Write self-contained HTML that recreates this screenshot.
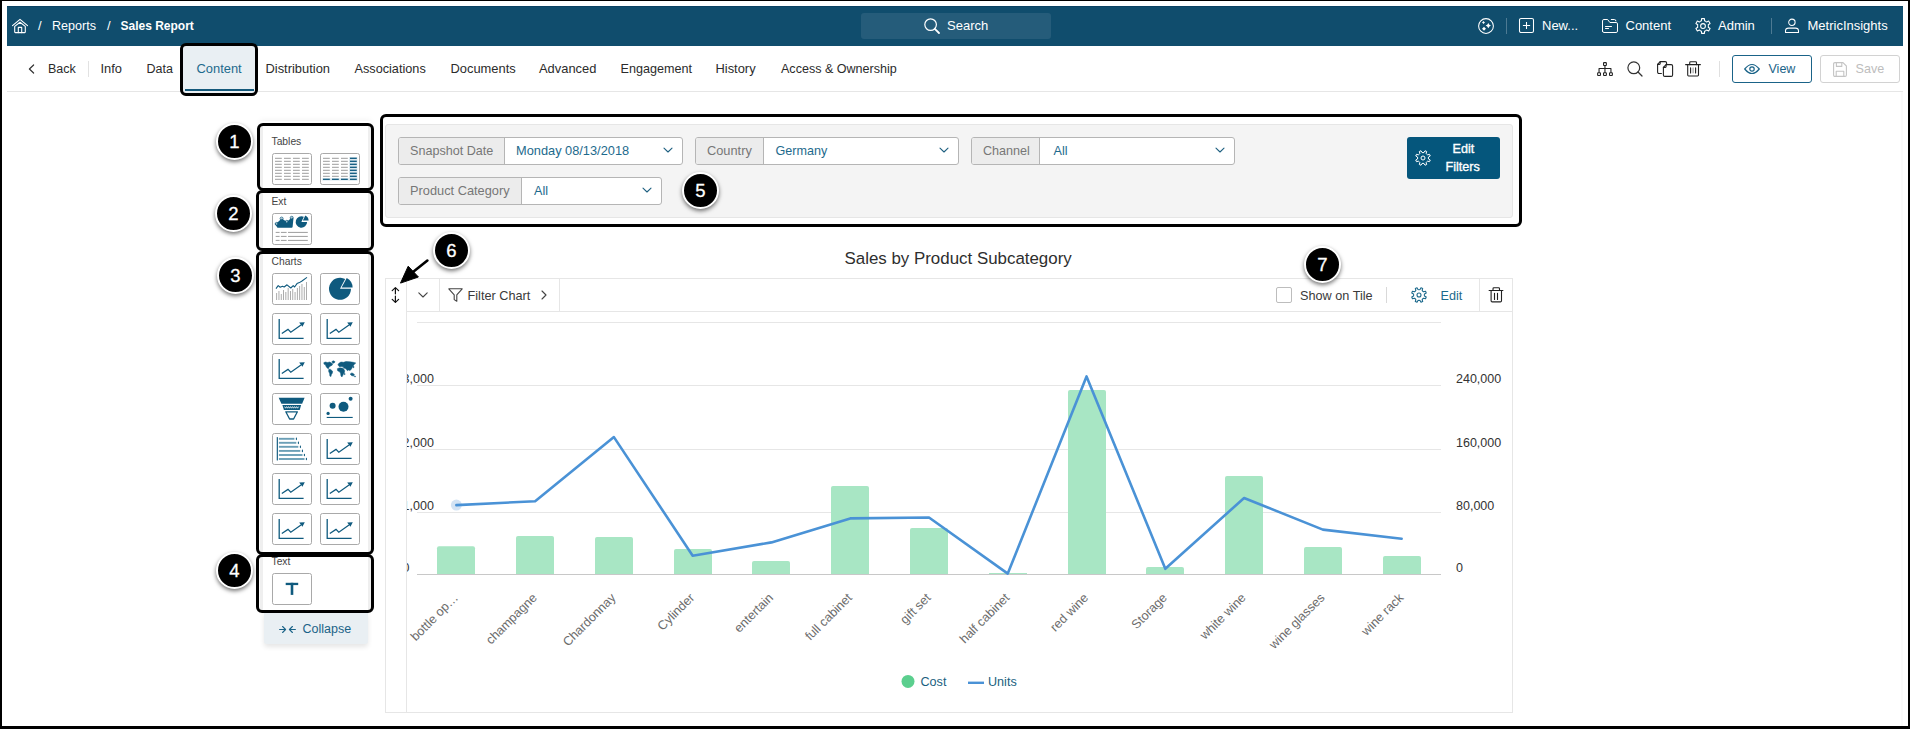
<!DOCTYPE html>
<html><head><meta charset="utf-8">
<style>
html,body{margin:0;padding:0;background:#000;}
body{width:1910px;height:729px;position:relative;overflow:hidden;font-family:"Liberation Sans",sans-serif;}
#frame{position:absolute;left:2px;top:1px;width:1906px;height:725px;background:#fff;overflow:hidden;}
.a{position:absolute;}
.t{position:absolute;white-space:nowrap;line-height:1;font-family:"Liberation Sans",sans-serif;}
svg{position:absolute;overflow:visible;}
</style></head>
<body>
<div id="frame"></div>
<!-- HEADER -->
<div class="a" style="left:7px;top:6px;width:1896px;height:40px;background:#104d6d;"></div>
<div class="a" style="left:7px;top:6px;width:1896px;height:1px;background:#0a4263;"></div>
<div class="a" style="left:861px;top:13px;width:190px;height:26px;background:#255c7a;border-radius:3px;"></div>
<div id="hdr">
<svg style="left:12px;top:18px" width="16" height="16" viewBox="0 0 16 16" fill="none" stroke="#fff" stroke-width="1.1" stroke-linejoin="round" stroke-linecap="round"><path d="M0.5 7.7 L8 1.4 L15.5 7.7"/><path d="M2.7 8.4 L8 4.3 L13.3 8.4 V14 Q13.3 14.6 12.7 14.6 H3.3 Q2.7 14.6 2.7 14 Z"/><path d="M6.3 14.6 V9.4 H9.7 V14.6"/></svg>
<div class="t" style="left:38px;top:19px;font-size:13px;color:#fff;">/</div>
<div class="t" style="left:52px;top:20px;font-size:12.6px;color:#fff;">Reports</div>
<div class="t" style="left:107px;top:19px;font-size:13px;color:#fff;">/</div>
<div class="t" style="left:120.5px;top:20px;font-size:12.0px;font-weight:bold;color:#fff;">Sales Report</div>
<svg style="left:924px;top:18px" width="16" height="16" viewBox="0 0 16 16" fill="none" stroke="#fff" stroke-width="1.2" stroke-linecap="round"><circle cx="6.6" cy="6.6" r="5.8"/><path d="M10.8 10.8 L15 15" stroke-width="1.8"/></svg>
<div class="t" style="left:947px;top:19px;font-size:13px;color:#fff;">Search</div>
<svg style="left:1478px;top:18px" width="16" height="16" viewBox="0 0 16 16" fill="none" stroke="#fff" stroke-width="1.05"><circle cx="8" cy="8" r="7.4"/><path d="M10.3 4.8999999999999995 Q11.056000000000001 6.843999999999999 13.0 7.6 Q11.056000000000001 8.356 10.3 10.3 Q9.544 8.356 7.6000000000000005 7.6 Q9.544 6.843999999999999 10.3 4.8999999999999995Z" fill="#fff" stroke="none"/><path d="M5.5 3.0 Q6.025 3.975 7.0 4.5 Q6.025 5.025 5.5 6.0 Q4.975 5.025 4.0 4.5 Q4.975 3.975 5.5 3.0Z" fill="#fff" stroke="none"/><path d="M6 8.7 Q6.8 9.899999999999999 8.0 10.7 Q6.8 11.5 6 12.7 Q5.2 11.5 4.0 10.7 Q5.2 9.899999999999999 6 8.7Z" fill="#fff" stroke="none"/></svg>
<div class="a" style="left:1506px;top:18px;width:1px;height:16px;background:#4d7a93;"></div>
<svg style="left:1519px;top:18px" width="15" height="15" viewBox="0 0 15 15" fill="none" stroke="#fff" stroke-width="1.05"><rect x="0.5" y="0.5" width="14" height="14" rx="1.6"/><path d="M7.5 3.9 V11.1 M3.9 7.5 H11.1"/></svg>
<div class="t" style="left:1542px;top:19px;font-size:13px;color:#fff;">New...</div>
<svg style="left:1601px;top:18px" width="18" height="16" viewBox="0 0 18 16" fill="none" stroke="#fff" stroke-width="1" stroke-linejoin="round" stroke-linecap="round"><path d="M1.5 13 V2.9 Q1.5 1.5 2.9 1.5 H6.6 L8.9 4.5 H15.1 Q16.5 4.5 16.5 5.9 V13.1 Q16.5 14.5 15.1 14.5 H2.9 Q1.5 14.5 1.5 13.1Z"/><path d="M10.3 1.5 H13.5 Q14.9 1.5 14.9 2.9"/><path d="M4.5 8.5 H10.5 M4.5 10.5 H7.5"/></svg>
<div class="t" style="left:1625.5px;top:19px;font-size:13px;color:#fff;">Content</div>
<svg style="left:1695px;top:18px" width="16" height="16" viewBox="0 0 16 16" fill="none" stroke="#fff" stroke-width="1.05" stroke-linejoin="round"><path d="M5.30 3.32 L6.42 2.84 L6.57 0.64 L9.43 0.64 L9.58 2.84 L10.70 3.32 L11.68 4.05 L13.66 3.08 L15.09 5.56 L13.26 6.79 L13.40 8.00 L13.26 9.21 L15.09 10.44 L13.66 12.92 L11.68 11.95 L10.70 12.68 L9.58 13.16 L9.43 15.36 L6.57 15.36 L6.42 13.16 L5.30 12.68 L4.32 11.95 L2.34 12.92 L0.91 10.44 L2.74 9.21 L2.60 8.00 L2.74 6.79 L0.91 5.56 L2.34 3.08 L4.32 4.05Z"/><circle cx="8" cy="8" r="2.4"/></svg>
<div class="t" style="left:1718px;top:19px;font-size:13px;color:#fff;">Admin</div>
<div class="a" style="left:1771px;top:18px;width:1px;height:16px;background:#4d7a93;"></div>
<svg style="left:1785px;top:18px" width="15" height="15" viewBox="0 0 15 15" fill="none" stroke="#fff" stroke-width="1.05"><circle cx="6.9" cy="4.3" r="3.2"/><path d="M0.5 14.4 V13 Q0.5 10.1 3.6 10.1 H10.4 Q13.5 10.1 13.5 13 V14.4 Z" stroke-linejoin="round"/></svg>
<div class="t" style="left:1807.5px;top:19px;font-size:13px;color:#fff;">MetricInsights</div>
</div>
<!-- TABS -->
<div id="tabs">
<div class="a" style="left:7px;top:91px;width:1896px;height:1px;background:#e6e6e6;"></div>
<svg style="left:28px;top:64px" width="7" height="10" viewBox="0 0 7 10" fill="none" stroke="#333" stroke-width="1.2" stroke-linecap="round" stroke-linejoin="round"><path d="M5.6 1 L1.4 5 L5.6 9"/></svg>
<div class="t" style="left:48px;top:63px;font-size:12.5px;color:#2b2b2b;">Back</div>
<div class="a" style="left:88px;top:61px;width:1px;height:16px;background:#e2e2e2;"></div>
<div class="t" style="left:100.5px;top:63px;font-size:12.9px;color:#2b2b2b;">Info</div>
<div class="t" style="left:146.5px;top:63px;font-size:12.5px;color:#2b2b2b;">Data</div>
<div class="a" style="left:183px;top:46px;width:72px;height:47px;background:#e9eff3;"></div>
<div class="a" style="left:185px;top:89.3px;width:69px;height:1.8px;background:#15597b;"></div>
<div class="t" style="left:196.5px;top:63px;font-size:12.9px;color:#1d6a8d;">Content</div>
<div class="t" style="left:265.5px;top:63px;font-size:12.9px;color:#2b2b2b;">Distribution</div>
<div class="t" style="left:354.5px;top:63px;font-size:12.7px;color:#2b2b2b;">Associations</div>
<div class="t" style="left:450.5px;top:63px;font-size:12.9px;color:#2b2b2b;">Documents</div>
<div class="t" style="left:539px;top:63px;font-size:12.9px;color:#2b2b2b;">Advanced</div>
<div class="t" style="left:620.5px;top:63px;font-size:12.6px;color:#2b2b2b;">Engagement</div>
<div class="t" style="left:715.5px;top:63px;font-size:12.9px;color:#2b2b2b;">History</div>
<div class="t" style="left:781px;top:63px;font-size:12.55px;color:#2b2b2b;">Access &amp; Ownership</div>
<svg style="left:1597px;top:62px" width="17" height="15" viewBox="0 0 17 15" fill="none" stroke="#222" stroke-width="1.1" stroke-linejoin="round"><rect x="6.55" y="0.65" width="2.8" height="2.8" rx="0.5"/><rect x="0.65" y="10.75" width="2.8" height="2.8" rx="0.5"/><rect x="6.55" y="10.75" width="2.8" height="2.8" rx="0.5"/><rect x="12.55" y="10.75" width="2.8" height="2.8" rx="0.5"/><path d="M7.95 3.5 V10.7 M2.05 10.7 V6.5 H13.95 V10.7"/></svg>
<svg style="left:1627px;top:61px" width="16" height="16" viewBox="0 0 16 16" fill="none" stroke="#333" stroke-width="1.2" stroke-linecap="round"><circle cx="6.8" cy="6.8" r="5.9"/><path d="M11 11 L15 15"/></svg>
<svg style="left:1657px;top:61px" width="17" height="16" viewBox="0 0 17 16" fill="none" stroke="#222" stroke-width="1.1" stroke-linejoin="round" stroke-linecap="round"><path d="M4.4 12.5 H2 Q0.6 12.5 0.6 11.1 V3.4 L3.2 0.6 H8.2 Q9.6 0.6 9.6 2 V2.8"/><path d="M0.6 3.4 H2.4 Q3.2 3.4 3.2 2.6 V0.6"/><path d="M6.4 14 V6.4 L9.1 3.6 H14.2 Q15.6 3.6 15.6 5 V14 Q15.6 15.4 14.2 15.4 H7.8 Q6.4 15.4 6.4 14 Z"/><path d="M6.4 6.4 H8.3 Q9.1 6.4 9.1 5.6 V3.6"/></svg>
<svg style="left:1685px;top:61px" width="17" height="16" viewBox="0 0 17 16" fill="none" stroke="#222" stroke-width="1.1" stroke-linejoin="round" stroke-linecap="round"><path d="M0.6 3.6 H15.4"/><path d="M4.7 3.6 V1.7 Q4.7 0.8 5.6 0.8 H10.6 Q11.5 0.8 11.5 1.7 V3.6"/><path d="M2.7 3.6 V14.1 Q2.7 15 3.6 15 H12.6 Q13.5 15 13.5 14.1 V3.6"/><path d="M5.6 6.9 V11.9 M10.6 6.9 V11.9"/><path d="M8.1 6.9 V11.9" stroke-width="0.8" stroke="#777"/></svg>
<div class="a" style="left:1719px;top:61px;width:1px;height:16px;background:#e0e0e0;"></div>
<div class="a" style="left:1732px;top:55px;width:78px;height:26px;border:1px solid #1a6388;border-radius:3px;"></div>
<svg style="left:1744px;top:63px" width="16" height="12" viewBox="0 0 16 12" fill="none" stroke="#1a6388" stroke-width="1.2"><path d="M0.7 6 Q8 -3 15.3 6 Q8 15 0.7 6Z" stroke-linejoin="round"/><circle cx="8" cy="6" r="2.2"/></svg>
<div class="t" style="left:1768.5px;top:63px;font-size:12.5px;color:#1a6388;">View</div>
<div class="a" style="left:1820px;top:55px;width:78px;height:26px;border:1px solid #d2d2d2;border-radius:3px;"></div>
<svg style="left:1833px;top:62px" width="14" height="15" viewBox="0 0 14 15" fill="none" stroke="#c4c4c4" stroke-width="1.1" stroke-linejoin="round"><path d="M0.6 2 Q0.6 0.6 2 0.6 H10 L13.4 4 V13 Q13.4 14.4 12 14.4 H2 Q0.6 14.4 0.6 13Z"/><path d="M3.4 0.6 V4.4 H8.8 V0.6"/><path d="M3.2 14.4 V9.2 H10.8 V14.4"/></svg>
<div class="t" style="left:1855.5px;top:63px;font-size:12.6px;color:#bdbdbd;">Save</div>
</div>
<div class="a" style="left:1901px;top:92px;width:2px;height:634px;background:#fafafa;"></div>
<!-- PALETTE -->
<div id="palette">
<div class="a" style="left:260px;top:121px;width:111px;height:491px;background:#fff;box-shadow:0 -1px 6px rgba(0,0,0,0.05);"></div>
<div class="a" style="left:260px;top:125px;width:3px;height:487px;background:#efefef;"></div>
<div class="a" style="left:368px;top:125px;width:3px;height:487px;background:#efefef;"></div>
<div class="a" style="left:264px;top:612px;width:104px;height:32px;background:#e9eff3;border-radius:0 0 3px 3px;box-shadow:0 3px 5px rgba(0,0,0,0.10);"></div>
<svg style="left:279px;top:624.5px" width="17" height="9" viewBox="0 0 17 9" fill="none" stroke="#1a6388" stroke-width="1.1" stroke-linecap="round" stroke-linejoin="round"><path d="M0.6 4.5 H6.6 M3.6 1.5 L6.6 4.5 L3.6 7.5"/><path d="M16.4 4.5 H10.4 M13.4 1.5 L10.4 4.5 L13.4 7.5"/></svg>
<div class="t" style="left:302.5px;top:623px;font-size:12.5px;color:#1a6388;">Collapse</div>
<!--ICONS--><div class="a" style="left:272px;top:153px;width:40px;height:32px;box-sizing:border-box;border:1.3px solid #a9a9a9;border-radius:2.5px;background:#fff;"></div><svg style="left:272px;top:153px" width="40" height="32" viewBox="0 0 40 32"><rect x="3" y="4.80" width="6.8" height="1.0" fill="#9d9d9d"/><rect x="3" y="7.80" width="6.8" height="1.0" fill="#9d9d9d"/><rect x="3" y="10.80" width="6.8" height="1.0" fill="#9d9d9d"/><rect x="3" y="13.80" width="6.8" height="1.0" fill="#9d9d9d"/><rect x="3" y="16.80" width="6.8" height="1.0" fill="#9d9d9d"/><rect x="3" y="19.80" width="6.8" height="1.0" fill="#9d9d9d"/><rect x="3" y="22.80" width="6.8" height="1.0" fill="#9d9d9d"/><rect x="3" y="25.80" width="6.8" height="1.0" fill="#9d9d9d"/><rect x="12" y="4.80" width="6.8" height="1.0" fill="#9d9d9d"/><rect x="12" y="7.80" width="6.8" height="1.0" fill="#9d9d9d"/><rect x="12" y="10.80" width="6.8" height="1.0" fill="#9d9d9d"/><rect x="12" y="13.80" width="6.8" height="1.0" fill="#9d9d9d"/><rect x="12" y="16.80" width="6.8" height="1.0" fill="#9d9d9d"/><rect x="12" y="19.80" width="6.8" height="1.0" fill="#9d9d9d"/><rect x="12" y="22.80" width="6.8" height="1.0" fill="#9d9d9d"/><rect x="12" y="25.80" width="6.8" height="1.0" fill="#9d9d9d"/><rect x="21" y="4.80" width="6.8" height="1.0" fill="#9d9d9d"/><rect x="21" y="7.80" width="6.8" height="1.0" fill="#9d9d9d"/><rect x="21" y="10.80" width="6.8" height="1.0" fill="#9d9d9d"/><rect x="21" y="13.80" width="6.8" height="1.0" fill="#9d9d9d"/><rect x="21" y="16.80" width="6.8" height="1.0" fill="#9d9d9d"/><rect x="21" y="19.80" width="6.8" height="1.0" fill="#9d9d9d"/><rect x="21" y="22.80" width="6.8" height="1.0" fill="#9d9d9d"/><rect x="21" y="25.80" width="6.8" height="1.0" fill="#9d9d9d"/><rect x="30" y="4.80" width="6.8" height="1.0" fill="#9d9d9d"/><rect x="30" y="7.80" width="6.8" height="1.0" fill="#9d9d9d"/><rect x="30" y="10.80" width="6.8" height="1.0" fill="#9d9d9d"/><rect x="30" y="13.80" width="6.8" height="1.0" fill="#9d9d9d"/><rect x="30" y="16.80" width="6.8" height="1.0" fill="#9d9d9d"/><rect x="30" y="19.80" width="6.8" height="1.0" fill="#9d9d9d"/><rect x="30" y="22.80" width="6.8" height="1.0" fill="#9d9d9d"/><rect x="30" y="25.80" width="6.8" height="1.0" fill="#9d9d9d"/></svg>
<div class="a" style="left:320px;top:153px;width:40px;height:32px;box-sizing:border-box;border:1.3px solid #a9a9a9;border-radius:2.5px;background:#fff;"></div><svg style="left:320px;top:153px" width="40" height="32" viewBox="0 0 40 32"><rect x="29" y="4" width="8.4" height="23.6" fill="#dbe8ef"/><rect x="2.2" y="25.2" width="35.2" height="2.4" fill="#dbe8ef"/><rect x="3" y="4.80" width="6.8" height="1.0" fill="#9d9d9d"/><rect x="3" y="7.80" width="6.8" height="1.0" fill="#9d9d9d"/><rect x="3" y="10.80" width="6.8" height="1.0" fill="#9d9d9d"/><rect x="3" y="13.80" width="6.8" height="1.0" fill="#9d9d9d"/><rect x="3" y="16.80" width="6.8" height="1.0" fill="#9d9d9d"/><rect x="3" y="19.80" width="6.8" height="1.0" fill="#9d9d9d"/><rect x="3" y="22.80" width="6.8" height="1.0" fill="#9d9d9d"/><rect x="3" y="25.65" width="6.8" height="1.3" fill="#0f5a7e"/><rect x="12" y="4.80" width="6.8" height="1.0" fill="#9d9d9d"/><rect x="12" y="7.80" width="6.8" height="1.0" fill="#9d9d9d"/><rect x="12" y="10.80" width="6.8" height="1.0" fill="#9d9d9d"/><rect x="12" y="13.80" width="6.8" height="1.0" fill="#9d9d9d"/><rect x="12" y="16.80" width="6.8" height="1.0" fill="#9d9d9d"/><rect x="12" y="19.80" width="6.8" height="1.0" fill="#9d9d9d"/><rect x="12" y="22.80" width="6.8" height="1.0" fill="#9d9d9d"/><rect x="12" y="25.65" width="6.8" height="1.3" fill="#0f5a7e"/><rect x="21" y="4.80" width="6.8" height="1.0" fill="#9d9d9d"/><rect x="21" y="7.80" width="6.8" height="1.0" fill="#9d9d9d"/><rect x="21" y="10.80" width="6.8" height="1.0" fill="#9d9d9d"/><rect x="21" y="13.80" width="6.8" height="1.0" fill="#9d9d9d"/><rect x="21" y="16.80" width="6.8" height="1.0" fill="#9d9d9d"/><rect x="21" y="19.80" width="6.8" height="1.0" fill="#9d9d9d"/><rect x="21" y="22.80" width="6.8" height="1.0" fill="#9d9d9d"/><rect x="21" y="25.65" width="6.8" height="1.3" fill="#0f5a7e"/><rect x="30" y="4.65" width="6.8" height="1.3" fill="#0f5a7e"/><rect x="30" y="7.65" width="6.8" height="1.3" fill="#0f5a7e"/><rect x="30" y="10.65" width="6.8" height="1.3" fill="#0f5a7e"/><rect x="30" y="13.65" width="6.8" height="1.3" fill="#0f5a7e"/><rect x="30" y="16.65" width="6.8" height="1.3" fill="#0f5a7e"/><rect x="30" y="19.65" width="6.8" height="1.3" fill="#0f5a7e"/><rect x="30" y="22.65" width="6.8" height="1.3" fill="#0f5a7e"/><rect x="30" y="25.65" width="6.8" height="1.3" fill="#0f5a7e"/></svg>
<div class="a" style="left:272px;top:213px;width:40px;height:32px;box-sizing:border-box;border:1.3px solid #a9a9a9;border-radius:2.5px;background:#fff;"></div><svg style="left:272px;top:213px" width="40" height="32" viewBox="0 0 40 32"><path d="M3.2 11 Q3.6 9.8 4.7 10.2 L9.6 5.6 L14.8 8.8 L19.7 4.8 Q21.4 4.4 21.4 6 L20.6 14 Q20.4 14.8 19.6 14.8 H6 Q5 14.8 4.8 13.8 Z" fill="#0f5a7e"/><g fill="#a9c4d2"><circle cx="4.7" cy="10.9" r="0.9"/><circle cx="9.6" cy="5.6" r="0.9"/><circle cx="14.8" cy="8.8" r="0.9"/><circle cx="19.7" cy="4.8" r="0.9"/></g><g fill="none" stroke="#0f5a7e" stroke-width="0.8"><circle cx="4.7" cy="10.9" r="1.5"/><circle cx="9.6" cy="5.6" r="1.5"/><circle cx="14.8" cy="8.8" r="1.5"/><circle cx="19.7" cy="4.8" r="1.5"/></g><path d="M29.4 9 L35.1 9 A5.7 5.7 0 1 1 31.81 3.83 Z" fill="#0f5a7e"/><path d="M30.90 7.60 L33.31 2.43 A5.7 5.7 0 0 1 36.60 7.60 Z" fill="#0f5a7e"/><rect x="3.7" y="18.9" width="3.9" height="1" fill="#9d9d9d"/><rect x="8.9" y="18.9" width="5.7" height="1" fill="#9d9d9d"/><rect x="16" y="18.9" width="19.8" height="1" fill="#9d9d9d"/><rect x="3.7" y="22.9" width="3.9" height="1" fill="#9d9d9d"/><rect x="8.9" y="22.9" width="5.7" height="1" fill="#9d9d9d"/><rect x="16" y="22.9" width="19.8" height="1" fill="#9d9d9d"/><rect x="3.7" y="26.9" width="3.9" height="1" fill="#9d9d9d"/><rect x="8.9" y="26.9" width="5.7" height="1" fill="#9d9d9d"/><rect x="16" y="26.9" width="19.8" height="1" fill="#9d9d9d"/></svg>
<div class="a" style="left:272px;top:273px;width:40px;height:32px;box-sizing:border-box;border:1.3px solid #a9a9a9;border-radius:2.5px;background:#fff;"></div><svg style="left:272px;top:273px" width="40" height="32" viewBox="0 0 40 32"><rect x="4.20" y="20" width="0.9" height="7" fill="#a3a3a3"/><rect x="6.50" y="18" width="0.9" height="9" fill="#a3a3a3"/><rect x="8.80" y="21" width="0.9" height="6" fill="#a3a3a3"/><rect x="11.10" y="17" width="0.9" height="10" fill="#a3a3a3"/><rect x="13.40" y="19" width="0.9" height="8" fill="#a3a3a3"/><rect x="15.70" y="15" width="0.9" height="12" fill="#a3a3a3"/><rect x="18.00" y="18" width="0.9" height="9" fill="#a3a3a3"/><rect x="20.30" y="16" width="0.9" height="11" fill="#a3a3a3"/><rect x="22.60" y="19" width="0.9" height="8" fill="#a3a3a3"/><rect x="24.90" y="15" width="0.9" height="12" fill="#a3a3a3"/><rect x="27.20" y="13" width="0.9" height="14" fill="#a3a3a3"/><rect x="29.50" y="11" width="0.9" height="16" fill="#a3a3a3"/><rect x="31.80" y="14" width="0.9" height="13" fill="#a3a3a3"/><rect x="34.10" y="9" width="0.9" height="18" fill="#a3a3a3"/><path d="M4 15.6 L6.2 12.6 L8.2 14.2 L10.4 13.2 L12.2 14 L15 11.8 L18.8 15 L21.2 12.6 L22.6 14 L25 10.6 L27.4 9.6 L30 8 L35 4.4" fill="none" stroke="#0f5a7e" stroke-width="1.1" stroke-linejoin="round"/></svg>
<div class="a" style="left:320px;top:273px;width:40px;height:32px;box-sizing:border-box;border:1.3px solid #a9a9a9;border-radius:2.5px;background:#fff;"></div><svg style="left:320px;top:273px" width="40" height="32" viewBox="0 0 40 32"><path d="M20 15.8 L31 15.8 A11 11 0 1 1 25.16 6.09 Z" fill="#0f5a7e"/><path d="M21.60 14.60 L26.76 4.89 A11 11 0 0 1 32.60 14.60 Z" fill="#0f5a7e"/></svg>
<div class="a" style="left:272px;top:313px;width:40px;height:32px;box-sizing:border-box;border:1.3px solid #a9a9a9;border-radius:2.5px;background:#fff;"></div><svg style="left:272px;top:313px" width="40" height="32" viewBox="0 0 40 32"><path d="M7.2 6 V25.4 H31.6" fill="none" stroke="#0f5a7e" stroke-width="1.3"/><path d="M9.8 20.6 L16 16.4 L18.8 19.2 L29 12" fill="none" stroke="#0f5a7e" stroke-width="1.25"/><path d="M32.8 9.2 L27.2 9.6 L30.4 13.8 Z" fill="#0f5a7e"/></svg>
<div class="a" style="left:320px;top:313px;width:40px;height:32px;box-sizing:border-box;border:1.3px solid #a9a9a9;border-radius:2.5px;background:#fff;"></div><svg style="left:320px;top:313px" width="40" height="32" viewBox="0 0 40 32"><path d="M7.2 6 V25.4 H31.6" fill="none" stroke="#0f5a7e" stroke-width="1.3"/><path d="M9.8 20.6 L16 16.4 L18.8 19.2 L29 12" fill="none" stroke="#0f5a7e" stroke-width="1.25"/><path d="M32.8 9.2 L27.2 9.6 L30.4 13.8 Z" fill="#0f5a7e"/></svg>
<div class="a" style="left:272px;top:353px;width:40px;height:32px;box-sizing:border-box;border:1.3px solid #a9a9a9;border-radius:2.5px;background:#fff;"></div><svg style="left:272px;top:353px" width="40" height="32" viewBox="0 0 40 32"><path d="M7.2 6 V25.4 H31.6" fill="none" stroke="#0f5a7e" stroke-width="1.3"/><path d="M9.8 20.6 L16 16.4 L18.8 19.2 L29 12" fill="none" stroke="#0f5a7e" stroke-width="1.25"/><path d="M32.8 9.2 L27.2 9.6 L30.4 13.8 Z" fill="#0f5a7e"/></svg>
<div class="a" style="left:320px;top:353px;width:40px;height:32px;box-sizing:border-box;border:1.3px solid #a9a9a9;border-radius:2.5px;background:#fff;"></div><svg style="left:320px;top:353px" width="40" height="32" viewBox="0 0 40 32"><g fill="#0f5a7e" stroke="#0f5a7e" stroke-width="0.5" stroke-linejoin="round"><path d="M3.7 9.8 L5.2 9.0 L7.7 9.5 L9.6 9.0 L11.1 9.8 L12.6 10.9 L12.1 12.2 L10.1 13.2 L8.9 14.5 L8.4 15.7 L7.4 15.2 L6.2 13.7 L5.4 11.8 L4.2 11.3 Z"/><path d="M11.9 8.5 L13.6 7.8 L15.1 8.8 L14.1 10 L12.6 10.3 Z"/><path d="M8.9 16.2 L10.6 16.4 L12.6 18.2 L12.4 20.1 L11.4 21.6 L10.9 23.6 L9.9 23.1 L9.6 20.6 L8.6 18.2 Z"/><path d="M18 11.3 L19.5 9.8 L21 9 L23.5 9.3 L26 8.5 L29.9 8.8 L33.3 9.3 L35.8 10 L34.3 11.3 L33.3 12.7 L32.3 14.2 L31.4 16.2 L29.9 17.5 L28.4 17 L27.4 17.7 L25.9 15.8 L24.4 15.2 L23 14.7 L21.5 13.7 L19.5 13.7 L18.5 12.7 Z"/><path d="M17.3 15.7 L19 15 L21.5 14.7 L23.5 15.7 L24.7 17.7 L24.4 19.6 L23.2 21.6 L22 23.9 L21 23.1 L20.5 20.1 L19.5 18.7 L17.6 17.7 Z"/><path d="M30.1 21.1 L31.8 19.9 L33.3 20.6 L34.6 22.1 L33.3 23.1 L31.4 22.4 Z"/><circle cx="33.4" cy="14" r="0.7"/><circle cx="24.6" cy="21" r="0.6"/><circle cx="35" cy="23.6" r="0.5"/></g><path d="M20.6 14.3 H23.4" stroke="#fff" stroke-width="0.8"/></svg>
<div class="a" style="left:272px;top:393px;width:40px;height:32px;box-sizing:border-box;border:1.3px solid #a9a9a9;border-radius:2.5px;background:#fff;"></div><svg style="left:272px;top:393px" width="40" height="32" viewBox="0 0 40 32"><path d="M6.7 4.8 H32.6 L30.1 10.8 H9.4 Z" fill="#0f5a7e"/><path d="M10.4 12 H29.1 L27.7 16.9 H11.9 Z" fill="#0f5a7e"/><path d="M12.6 13.6 L13.6 15.2 L14.6 13.6 L15.6 15.2 L16.6 13.6 L17.6 15.2 L18.6 13.6 L19.6 15.2 L20.6 13.6 L21.6 15.2 L22.6 13.6 L23.6 15.2 L24.6 13.6 L25.6 15.2 L26.6 13.6" fill="none" stroke="#fff" stroke-width="0.8"/><path d="M13.8 18.8 H25.4 L21.6 26 H17.6 Z" fill="none" stroke="#0f5a7e" stroke-width="1.3" stroke-linejoin="round"/></svg>
<div class="a" style="left:320px;top:393px;width:40px;height:32px;box-sizing:border-box;border:1.3px solid #a9a9a9;border-radius:2.5px;background:#fff;"></div><svg style="left:320px;top:393px" width="40" height="32" viewBox="0 0 40 32"><g fill="#0f5a7e"><circle cx="30.6" cy="5.8" r="2"/><circle cx="12.6" cy="12.7" r="3"/><circle cx="23.5" cy="13.7" r="5"/><circle cx="8.1" cy="20.4" r="1.6"/></g><rect x="6.7" y="23.9" width="26" height="1.1" fill="#0f5a7e"/></svg>
<div class="a" style="left:272px;top:433px;width:40px;height:32px;box-sizing:border-box;border:1.3px solid #a9a9a9;border-radius:2.5px;background:#fff;"></div><svg style="left:272px;top:433px" width="40" height="32" viewBox="0 0 40 32"><rect x="4.75" y="4" width="1.15" height="23.6" rx="0.5" fill="#0f5a7e"/><rect x="6.9" y="4.85" width="15.50" height="1.9" fill="#6b9fb6"/><ellipse cx="24.4" cy="5.8" rx="0.6" ry="1.35" fill="#0f5a7e"/><rect x="6.9" y="8.85" width="17.40" height="1.9" fill="#6b9fb6"/><ellipse cx="26.4" cy="9.8" rx="0.6" ry="1.35" fill="#0f5a7e"/><rect x="6.9" y="12.85" width="19.40" height="1.9" fill="#6b9fb6"/><ellipse cx="28.4" cy="13.8" rx="0.6" ry="1.35" fill="#0f5a7e"/><rect x="6.9" y="16.95" width="21.40" height="1.9" fill="#6b9fb6"/><ellipse cx="30.4" cy="17.9" rx="0.6" ry="1.35" fill="#0f5a7e"/><rect x="6.9" y="21.05" width="23.60" height="1.9" fill="#6b9fb6"/><ellipse cx="32.400000000000006" cy="22" rx="0.6" ry="1.35" fill="#0f5a7e"/><rect x="6.9" y="25.05" width="25.60" height="1.9" fill="#6b9fb6"/><ellipse cx="34.400000000000006" cy="26" rx="0.6" ry="1.35" fill="#0f5a7e"/></svg>
<div class="a" style="left:320px;top:433px;width:40px;height:32px;box-sizing:border-box;border:1.3px solid #a9a9a9;border-radius:2.5px;background:#fff;"></div><svg style="left:320px;top:433px" width="40" height="32" viewBox="0 0 40 32"><path d="M7.2 6 V25.4 H31.6" fill="none" stroke="#0f5a7e" stroke-width="1.3"/><path d="M9.8 20.6 L16 16.4 L18.8 19.2 L29 12" fill="none" stroke="#0f5a7e" stroke-width="1.25"/><path d="M32.8 9.2 L27.2 9.6 L30.4 13.8 Z" fill="#0f5a7e"/></svg>
<div class="a" style="left:272px;top:473px;width:40px;height:32px;box-sizing:border-box;border:1.3px solid #a9a9a9;border-radius:2.5px;background:#fff;"></div><svg style="left:272px;top:473px" width="40" height="32" viewBox="0 0 40 32"><path d="M7.2 6 V25.4 H31.6" fill="none" stroke="#0f5a7e" stroke-width="1.3"/><path d="M9.8 20.6 L16 16.4 L18.8 19.2 L29 12" fill="none" stroke="#0f5a7e" stroke-width="1.25"/><path d="M32.8 9.2 L27.2 9.6 L30.4 13.8 Z" fill="#0f5a7e"/></svg>
<div class="a" style="left:320px;top:473px;width:40px;height:32px;box-sizing:border-box;border:1.3px solid #a9a9a9;border-radius:2.5px;background:#fff;"></div><svg style="left:320px;top:473px" width="40" height="32" viewBox="0 0 40 32"><path d="M7.2 6 V25.4 H31.6" fill="none" stroke="#0f5a7e" stroke-width="1.3"/><path d="M9.8 20.6 L16 16.4 L18.8 19.2 L29 12" fill="none" stroke="#0f5a7e" stroke-width="1.25"/><path d="M32.8 9.2 L27.2 9.6 L30.4 13.8 Z" fill="#0f5a7e"/></svg>
<div class="a" style="left:272px;top:513px;width:40px;height:32px;box-sizing:border-box;border:1.3px solid #a9a9a9;border-radius:2.5px;background:#fff;"></div><svg style="left:272px;top:513px" width="40" height="32" viewBox="0 0 40 32"><path d="M7.2 6 V25.4 H31.6" fill="none" stroke="#0f5a7e" stroke-width="1.3"/><path d="M9.8 20.6 L16 16.4 L18.8 19.2 L29 12" fill="none" stroke="#0f5a7e" stroke-width="1.25"/><path d="M32.8 9.2 L27.2 9.6 L30.4 13.8 Z" fill="#0f5a7e"/></svg>
<div class="a" style="left:320px;top:513px;width:40px;height:32px;box-sizing:border-box;border:1.3px solid #a9a9a9;border-radius:2.5px;background:#fff;"></div><svg style="left:320px;top:513px" width="40" height="32" viewBox="0 0 40 32"><path d="M7.2 6 V25.4 H31.6" fill="none" stroke="#0f5a7e" stroke-width="1.3"/><path d="M9.8 20.6 L16 16.4 L18.8 19.2 L29 12" fill="none" stroke="#0f5a7e" stroke-width="1.25"/><path d="M32.8 9.2 L27.2 9.6 L30.4 13.8 Z" fill="#0f5a7e"/></svg>
<div class="a" style="left:272px;top:573px;width:40px;height:32px;box-sizing:border-box;border:1.3px solid #a9a9a9;border-radius:2.5px;background:#fff;"></div><svg style="left:272px;top:573px" width="40" height="32" viewBox="0 0 40 32"><rect x="13.7" y="9.8" width="12.5" height="2.3" fill="#0f5a7e"/><rect x="18.7" y="9.8" width="2.6" height="12.1" fill="#0f5a7e"/></svg><!--/ICONS-->
<div class="t" style="left:271.5px;top:136.5px;font-size:10.3px;color:#444;">Tables</div>
<div class="t" style="left:271.5px;top:196.5px;font-size:10.3px;color:#444;">Ext</div>
<div class="t" style="left:271.5px;top:256.5px;font-size:10.3px;color:#444;">Charts</div>
<div class="t" style="left:271.5px;top:556.5px;font-size:10.3px;color:#444;">Text</div>
</div>
<!-- FILTERS -->
<div id="filters">
<div class="a" style="left:385px;top:124px;width:1128px;height:94px;box-sizing:border-box;background:#f4f4f4;border:1px solid #e6e6e6;border-radius:3px;"></div>
<!-- snapshot -->
<div class="a" style="left:398px;top:137px;width:285px;height:28px;box-sizing:border-box;background:#fff;border:1px solid #b5b5b5;border-radius:3px;overflow:hidden;"><div class="a" style="left:0;top:0;width:105px;height:26px;background:#ececec;border-right:1px solid #b5b5b5;"></div></div>
<div class="t" style="left:410px;top:145px;font-size:12.6px;color:#777;">Snapshot Date</div>
<div class="t" style="left:516px;top:145px;font-size:12.8px;color:#1d6a8d;">Monday 08/13/2018</div>
<svg style="left:663px;top:147px" width="10" height="6" viewBox="0 0 10 6" fill="none" stroke="#1d5f80" stroke-width="1.1" stroke-linecap="round" stroke-linejoin="round"><path d="M1 1.2 L5 5 L9 1.2"/></svg>
<!-- country -->
<div class="a" style="left:695px;top:137px;width:264px;height:28px;box-sizing:border-box;background:#fff;border:1px solid #b5b5b5;border-radius:3px;overflow:hidden;"><div class="a" style="left:0;top:0;width:67px;height:26px;background:#ececec;border-right:1px solid #b5b5b5;"></div></div>
<div class="t" style="left:707px;top:145px;font-size:12.8px;color:#777;">Country</div>
<div class="t" style="left:775.5px;top:145px;font-size:12.6px;color:#1d6a8d;">Germany</div>
<svg style="left:939px;top:147px" width="10" height="6" viewBox="0 0 10 6" fill="none" stroke="#1d5f80" stroke-width="1.1" stroke-linecap="round" stroke-linejoin="round"><path d="M1 1.2 L5 5 L9 1.2"/></svg>
<!-- channel -->
<div class="a" style="left:971px;top:137px;width:264px;height:28px;box-sizing:border-box;background:#fff;border:1px solid #b5b5b5;border-radius:3px;overflow:hidden;"><div class="a" style="left:0;top:0;width:67px;height:26px;background:#ececec;border-right:1px solid #b5b5b5;"></div></div>
<div class="t" style="left:983px;top:145px;font-size:12.6px;color:#777;">Channel</div>
<div class="t" style="left:1053.5px;top:145px;font-size:12.6px;color:#1d6a8d;">All</div>
<svg style="left:1215px;top:147px" width="10" height="6" viewBox="0 0 10 6" fill="none" stroke="#1d5f80" stroke-width="1.1" stroke-linecap="round" stroke-linejoin="round"><path d="M1 1.2 L5 5 L9 1.2"/></svg>
<!-- product category -->
<div class="a" style="left:398px;top:177px;width:264px;height:28px;box-sizing:border-box;background:#fff;border:1px solid #b5b5b5;border-radius:3px;overflow:hidden;"><div class="a" style="left:0;top:0;width:122px;height:26px;background:#ececec;border-right:1px solid #b5b5b5;"></div></div>
<div class="t" style="left:410px;top:185px;font-size:12.8px;color:#777;">Product Category</div>
<div class="t" style="left:534px;top:185px;font-size:12.6px;color:#1d6a8d;">All</div>
<svg style="left:642px;top:187px" width="10" height="6" viewBox="0 0 10 6" fill="none" stroke="#1d5f80" stroke-width="1.1" stroke-linecap="round" stroke-linejoin="round"><path d="M1 1.2 L5 5 L9 1.2"/></svg>
<!-- edit filters -->
<div class="a" style="left:1407px;top:137px;width:93px;height:42px;background:#05567c;border-radius:3px;"></div>
<svg style="left:1415px;top:150px" width="16" height="16" viewBox="0 0 16 16" fill="none" stroke="#fff" stroke-width="1" stroke-linejoin="round"><path d="M13.30 8.00 L13.51 9.02 L15.23 10.00 L14.53 11.69 L12.62 11.17 L11.75 11.75 L11.17 12.62 L11.69 14.53 L10.00 15.23 L9.02 13.51 L8.00 13.30 L6.98 13.51 L6.00 15.23 L4.31 14.53 L4.83 12.62 L4.25 11.75 L3.38 11.17 L1.47 11.69 L0.77 10.00 L2.49 9.02 L2.70 8.00 L2.49 6.98 L0.77 6.00 L1.47 4.31 L3.38 4.83 L4.25 4.25 L4.83 3.38 L4.31 1.47 L6.00 0.77 L6.98 2.49 L8.00 2.70 L9.02 2.49 L10.00 0.77 L11.69 1.47 L11.17 3.38 L11.75 4.25 L12.62 4.83 L14.53 4.31 L15.23 6.00 L13.51 6.98Z"/><circle cx="8" cy="8" r="2"/></svg>
<div class="t" style="left:1452.5px;top:142.5px;font-size:12.6px;color:#fff;-webkit-text-stroke:0.35px #fff;">Edit</div>
<div class="t" style="left:1445.5px;top:160.5px;font-size:12.6px;color:#fff;-webkit-text-stroke:0.35px #fff;">Filters</div>
</div>
<!-- CHART -->
<div id="chart">
<div class="a" style="left:385px;top:278px;width:1128px;height:435px;box-sizing:border-box;border:1px solid #e6e6e6;"></div>
<div class="a" style="left:406px;top:279px;width:1px;height:433px;background:#e6e6e6;"></div>
<div class="a" style="left:407px;top:311px;width:1105px;height:1px;background:#e6e6e6;"></div>
<div class="a" style="left:439px;top:279px;width:1px;height:32px;background:#e6e6e6;"></div>
<div class="a" style="left:559px;top:279px;width:1px;height:32px;background:#e6e6e6;"></div>
<div class="a" style="left:1479px;top:279px;width:1px;height:32px;background:#e6e6e6;"></div>
<div class="t" style="left:844.5px;top:251.2px;font-size:16.9px;color:#2e2e2e;">Sales by Product Subcategory</div>
<svg style="left:391px;top:287px" width="9" height="16" viewBox="0 0 9 16" fill="none" stroke="#111" stroke-width="1.2" stroke-linecap="round" stroke-linejoin="round"><path d="M4.4 0.6 V6.8 M1.2 3.6 L4.4 0.6 L7.6 3.6 M4.4 9.2 V15.4 M1.2 12.4 L4.4 15.4 L7.6 12.4"/></svg>
<svg style="left:418px;top:292px" width="10" height="6" viewBox="0 0 10 6" fill="none" stroke="#444" stroke-width="1.1" stroke-linecap="round" stroke-linejoin="round"><path d="M0.8 0.8 L5 5 L9.2 0.8"/></svg>
<svg style="left:448px;top:288px" width="15" height="14" viewBox="0 0 15 14" fill="none" stroke="#444" stroke-width="1.1" stroke-linejoin="round"><path d="M0.8 0.8 H14.2 L8.8 6.8 V13.2 L6.2 11.6 V6.8 Z"/></svg>
<div class="t" style="left:467.5px;top:290px;font-size:12.7px;color:#3a3a3a;">Filter Chart</div>
<svg style="left:541px;top:290px" width="6" height="10" viewBox="0 0 6 10" fill="none" stroke="#444" stroke-width="1.1" stroke-linecap="round" stroke-linejoin="round"><path d="M1 1 L5 5 L1 9"/></svg>
<div class="a" style="left:1276px;top:287px;width:16px;height:16px;box-sizing:border-box;border:1px solid #bdbdbd;border-radius:2px;background:#fff;"></div>
<div class="t" style="left:1300px;top:290px;font-size:12.7px;color:#3a3a3a;">Show on Tile</div>
<div class="a" style="left:1386px;top:287px;width:1px;height:16px;background:#d9d9d9;"></div>
<svg style="left:1411px;top:287px" width="16" height="16" viewBox="0 0 16 16" fill="none" stroke="#1d6a8d" stroke-width="1.1" stroke-linejoin="round"><path d="M13.30 8.00 L13.51 9.02 L15.23 10.00 L14.53 11.69 L12.62 11.17 L11.75 11.75 L11.17 12.62 L11.69 14.53 L10.00 15.23 L9.02 13.51 L8.00 13.30 L6.98 13.51 L6.00 15.23 L4.31 14.53 L4.83 12.62 L4.25 11.75 L3.38 11.17 L1.47 11.69 L0.77 10.00 L2.49 9.02 L2.70 8.00 L2.49 6.98 L0.77 6.00 L1.47 4.31 L3.38 4.83 L4.25 4.25 L4.83 3.38 L4.31 1.47 L6.00 0.77 L6.98 2.49 L8.00 2.70 L9.02 2.49 L10.00 0.77 L11.69 1.47 L11.17 3.38 L11.75 4.25 L12.62 4.83 L14.53 4.31 L15.23 6.00 L13.51 6.98Z"/><circle cx="8" cy="8" r="2"/></svg>
<div class="t" style="left:1440.5px;top:290px;font-size:12.6px;color:#1d6a8d;">Edit</div>
<svg style="left:1489px;top:287px" width="14" height="16" viewBox="0 0 14 16" fill="none" stroke="#222" stroke-width="1.1" stroke-linejoin="round" stroke-linecap="round"><path d="M0.1 3.5 H13.9"/><path d="M4 3.5 V1.7 Q4 0.8 4.9 0.8 H9.6 Q10.5 0.8 10.5 1.7 V3.5"/><path d="M2.1 3.5 V13.8 Q2.1 14.9 3.2 14.9 H11.4 Q12.5 14.9 12.5 13.8 V3.5"/><path d="M5.5 6.3 V12.5 M8.5 6.3 V12.5"/></svg>
<svg style="left:0;top:0" width="1910" height="729" viewBox="0 0 1910 729"><line x1="417" x2="1441" y1="322.5" y2="322.5" stroke="#e6e6e6" stroke-width="1"/><line x1="417" x2="1441" y1="385.5" y2="385.5" stroke="#e6e6e6" stroke-width="1"/><line x1="417" x2="1441" y1="449.5" y2="449.5" stroke="#e6e6e6" stroke-width="1"/><line x1="417" x2="1441" y1="512.5" y2="512.5" stroke="#e6e6e6" stroke-width="1"/><path d="M437.00 574.5 V548.20 Q437.00 546.20 439.00 546.20 H473.00 Q475.00 546.20 475.00 548.20 V574.5 Z" fill="#a8e6c4"/><path d="M516.00 574.5 V537.90 Q516.00 535.90 518.00 535.90 H552.00 Q554.00 535.90 554.00 537.90 V574.5 Z" fill="#a8e6c4"/><path d="M595.00 574.5 V539.00 Q595.00 537.00 597.00 537.00 H631.00 Q633.00 537.00 633.00 539.00 V574.5 Z" fill="#a8e6c4"/><path d="M674.00 574.5 V550.90 Q674.00 548.90 676.00 548.90 H710.00 Q712.00 548.90 712.00 550.90 V574.5 Z" fill="#a8e6c4"/><path d="M752.00 574.5 V563.10 Q752.00 561.10 754.00 561.10 H788.00 Q790.00 561.10 790.00 563.10 V574.5 Z" fill="#a8e6c4"/><path d="M831.00 574.5 V488.00 Q831.00 486.00 833.00 486.00 H867.00 Q869.00 486.00 869.00 488.00 V574.5 Z" fill="#a8e6c4"/><path d="M910.00 574.5 V530.00 Q910.00 528.00 912.00 528.00 H946.00 Q948.00 528.00 948.00 530.00 V574.5 Z" fill="#a8e6c4"/><rect x="989.00" y="573.00" width="38" height="1.50" fill="#a8e6c4"/><path d="M1068.00 574.5 V392.00 Q1068.00 390.00 1070.00 390.00 H1104.00 Q1106.00 390.00 1106.00 392.00 V574.5 Z" fill="#a8e6c4"/><path d="M1146.00 574.5 V569.00 Q1146.00 567.00 1148.00 567.00 H1182.00 Q1184.00 567.00 1184.00 569.00 V574.5 Z" fill="#a8e6c4"/><path d="M1225.00 574.5 V478.10 Q1225.00 476.10 1227.00 476.10 H1261.00 Q1263.00 476.10 1263.00 478.10 V574.5 Z" fill="#a8e6c4"/><path d="M1304.00 574.5 V549.10 Q1304.00 547.10 1306.00 547.10 H1340.00 Q1342.00 547.10 1342.00 549.10 V574.5 Z" fill="#a8e6c4"/><path d="M1383.00 574.5 V558.00 Q1383.00 556.00 1385.00 556.00 H1419.00 Q1421.00 556.00 1421.00 558.00 V574.5 Z" fill="#a8e6c4"/><line x1="417" x2="1441" y1="574.5" y2="574.5" stroke="#c8c8c8" stroke-width="1"/><circle cx="456.38" cy="505.1" r="5.5" fill="#d3e3f4"/><path d="M456.38 505.10 L535.15 501.20 L613.92 437.10 L692.69 555.70 L771.46 542.40 L850.23 518.40 L929.00 517.50 L1007.77 573.60 L1086.54 376.40 L1165.31 568.80 L1244.08 498.00 L1322.85 529.60 L1401.62 538.80" fill="none" stroke="#4a92d6" stroke-width="2.6" stroke-linejoin="round" stroke-linecap="round"/><text x="458.88" y="598.5" transform="rotate(-45 458.88 598.5)" text-anchor="end" font-family="Liberation Sans" font-size="12.6" fill="#6c6c6c">bottle op…</text><text x="537.65" y="598.5" transform="rotate(-45 537.65 598.5)" text-anchor="end" font-family="Liberation Sans" font-size="12.6" fill="#6c6c6c">champagne</text><text x="616.42" y="598.5" transform="rotate(-45 616.42 598.5)" text-anchor="end" font-family="Liberation Sans" font-size="12.6" fill="#6c6c6c">Chardonnay</text><text x="695.19" y="598.5" transform="rotate(-45 695.19 598.5)" text-anchor="end" font-family="Liberation Sans" font-size="12.6" fill="#6c6c6c">Cylinder</text><text x="773.96" y="598.5" transform="rotate(-45 773.96 598.5)" text-anchor="end" font-family="Liberation Sans" font-size="12.6" fill="#6c6c6c">entertain</text><text x="852.73" y="598.5" transform="rotate(-45 852.73 598.5)" text-anchor="end" font-family="Liberation Sans" font-size="12.6" fill="#6c6c6c">full cabinet</text><text x="931.50" y="598.5" transform="rotate(-45 931.50 598.5)" text-anchor="end" font-family="Liberation Sans" font-size="12.6" fill="#6c6c6c">gift set</text><text x="1010.27" y="598.5" transform="rotate(-45 1010.27 598.5)" text-anchor="end" font-family="Liberation Sans" font-size="12.6" fill="#6c6c6c">half cabinet</text><text x="1089.04" y="598.5" transform="rotate(-45 1089.04 598.5)" text-anchor="end" font-family="Liberation Sans" font-size="12.6" fill="#6c6c6c">red wine</text><text x="1167.81" y="598.5" transform="rotate(-45 1167.81 598.5)" text-anchor="end" font-family="Liberation Sans" font-size="12.6" fill="#6c6c6c">Storage</text><text x="1246.58" y="598.5" transform="rotate(-45 1246.58 598.5)" text-anchor="end" font-family="Liberation Sans" font-size="12.6" fill="#6c6c6c">white wine</text><text x="1325.35" y="598.5" transform="rotate(-45 1325.35 598.5)" text-anchor="end" font-family="Liberation Sans" font-size="12.6" fill="#6c6c6c">wine glasses</text><text x="1404.12" y="598.5" transform="rotate(-45 1404.12 598.5)" text-anchor="end" font-family="Liberation Sans" font-size="12.6" fill="#6c6c6c">wine rack</text><text x="1456" y="572.1" font-family="Liberation Sans" font-size="12.5" fill="#333">0</text><text x="1456" y="509.6" font-family="Liberation Sans" font-size="12.5" fill="#333">80,000</text><text x="1456" y="446.6" font-family="Liberation Sans" font-size="12.5" fill="#333">160,000</text><text x="1456" y="383.1" font-family="Liberation Sans" font-size="12.5" fill="#333">240,000</text><circle cx="908" cy="681.4" r="6.5" fill="#5bcf8e"/><text x="920.5" y="686" font-family="Liberation Sans" font-size="12.6" fill="#1a5f80">Cost</text><rect x="968" y="681.6" width="16" height="2.4" fill="#4a92d6"/><text x="988" y="686" font-family="Liberation Sans" font-size="12.6" fill="#1a5f80">Units</text></svg>
<div class="a" style="left:407px;top:330px;width:40px;height:260px;overflow:hidden;"><svg style="left:-407px;top:-330px" width="1910" height="729" viewBox="0 0 1910 729"><text x="402.6" y="572.1" font-family="Liberation Sans" font-size="12.5" fill="#333">0</text><text x="402.6" y="509.6" font-family="Liberation Sans" font-size="12.5" fill="#333">1,000</text><text x="402.6" y="446.6" font-family="Liberation Sans" font-size="12.5" fill="#333">2,000</text><text x="402.6" y="383.1" font-family="Liberation Sans" font-size="12.5" fill="#333">3,000</text></svg></div>
</div>
<!-- ANNOTATIONS -->
<div id="annot">
<style>
.bx{position:absolute;box-sizing:border-box;border:3px solid #000;border-radius:6px;}
.bd{position:absolute;box-sizing:border-box;width:37px;height:37px;border:2px solid #fff;border-radius:50%;background:#000;box-shadow:0 2px 4px rgba(0,0,0,0.55);color:#fff;font-family:"Liberation Sans",sans-serif;font-size:18.5px;line-height:33px;text-align:center;-webkit-text-stroke:0.3px #fff;}
</style>
<div class="bx" style="left:180px;top:43px;width:78px;height:53px;"></div>
<div class="bx" style="left:257px;top:123px;width:117px;height:67.5px;"></div>
<div class="bx" style="left:256px;top:189.5px;width:118px;height:61.5px;"></div>
<div class="bx" style="left:256px;top:250.5px;width:118px;height:304px;"></div>
<div class="bx" style="left:256px;top:553.5px;width:118px;height:59px;"></div>
<div class="bx" style="left:380px;top:114px;width:1142px;height:113px;"></div>
<div class="bd" style="left:216px;top:123px;">1</div>
<div class="bd" style="left:215px;top:195px;">2</div>
<div class="bd" style="left:217px;top:257px;">3</div>
<div class="bd" style="left:216px;top:552px;">4</div>
<div class="bd" style="left:682px;top:172px;">5</div>
<div class="bd" style="left:433px;top:232px;">6</div>
<div class="bd" style="left:1304px;top:246px;">7</div>
<svg style="left:0;top:0" width="1910" height="729" viewBox="0 0 1910 729"><path d="M427.4 260.6 L413 272" stroke="#000" stroke-width="2.6" stroke-linecap="round"/><path d="M400.5 283.1 L408.2 266.2 L418.4 277 Z" fill="#000" stroke="#000" stroke-width="1" stroke-linejoin="round"/></svg>
</div>
</body></html>
